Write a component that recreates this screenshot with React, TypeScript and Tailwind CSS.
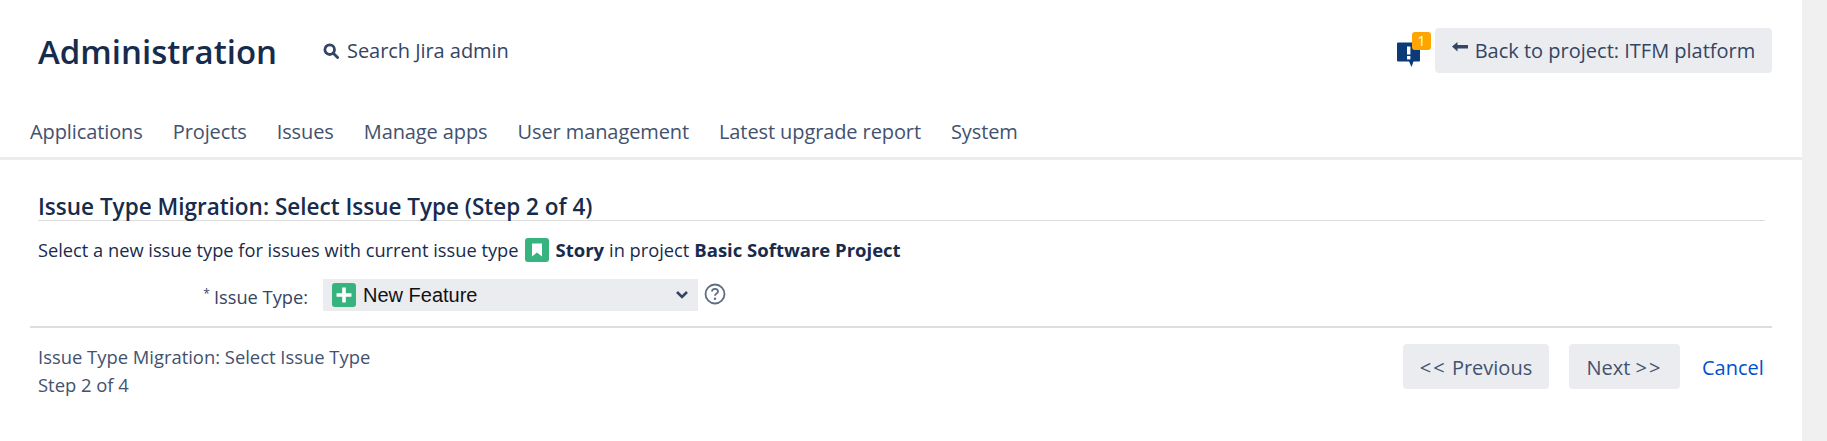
const font = { fontFamily: '"Open Sans", sans-serif' };

function SearchIcon() {
  return (
    <svg width="16" height="16" viewBox="0 0 16 16" fill="none" stroke="#344563" strokeWidth="2.8">
      <circle cx="6.7" cy="6.7" r="4.8" />
      <path d="M10 10l4.6 4.6" strokeLinecap="round" />
    </svg>
  );
}

function FeedbackIcon() {
  return (
    <div className="relative w-[35px] h-[36px] -mt-[2px]">
      <svg className="absolute left-0 top-[9px]" width="26" height="27" viewBox="0 0 26 27">
        <path d="M2 1.5h21a1 1 0 0 1 1 1v17a1 1 0 0 1-1 1h-5.5L15.5 26l-2.5-5.5H2a1 1 0 0 1-1-1v-17a1 1 0 0 1 1-1z" fill="#0b3a78" />
        <rect x="11" y="5.5" width="3.4" height="8" fill="#fff" />
        <rect x="11" y="15" width="3.4" height="3.4" fill="#fff" />
      </svg>
      <div className="absolute left-[16px] top-0 w-[19px] h-[18px] rounded-[3px] bg-[#ffa500] text-white text-[14px] leading-[17px] text-center">1</div>
    </div>
  );
}

function IssueIcon({ kind }: { kind: "story" | "feature" }) {
  return (
    <svg width="24" height="24" viewBox="0 0 24 24" className="shrink-0">
      <rect width="24" height="24" rx="3" fill="#36b37e" />
      {kind === "story" ? (
        <path d="M7 5.5h10v13l-5-4-5 4z" fill="#fff" />
      ) : (
        <path d="M10.2 4.5h3.6v5.7h5.7v3.6h-5.7v5.7h-3.6v-5.7H4.5v-3.6h5.7z" fill="#fff" />
      )}
    </svg>
  );
}

const navItems = ["Applications", "Projects", "Issues", "Manage apps", "User management", "Latest upgrade report", "System"];

export default function App() {
  return (
    <div style={font} className="flex w-[1827px] h-[441px] overflow-hidden bg-white text-[#172b4d]">
      <div className="w-[1802px] shrink-0">
        <header className="h-[101px] flex items-center pl-[38px] pr-[30px]">
          <h1 className="w-[285px] pt-[2px] text-[33px] leading-[40px] font-semibold text-[#172b4d] whitespace-nowrap">Administration</h1>
          <div className="flex items-center gap-[8px] text-[#344563] text-[20px] tracking-[-0.05px] whitespace-nowrap">
            <SearchIcon />
            <span>Search Jira admin</span>
          </div>
          <div className="ml-auto flex items-center gap-[4px]">
            <FeedbackIcon />
            <div className="h-[45px] w-[337px] rounded-[4px] bg-[#ebecf0] flex items-center justify-center gap-[7px] text-[#344563] text-[20px] whitespace-nowrap">
              <svg width="16" height="12" viewBox="0 0 16 12" className="-mt-[6px]" fill="#344563">
                <path d="M0 4.5L5.5 0v3H16v3.5H5.5v3z" />
              </svg>
              <span>Back to project: ITFM platform</span>
            </div>
          </div>
        </header>

        <nav className="h-[59px] border-b-[3px] border-[#ebecf0] flex items-center gap-[30px] pl-[30px] pt-[6px] text-[#42526e] text-[20px] tracking-[-0.1px] whitespace-nowrap">
          {navItems.map((n) => (
            <span key={n}>{n}</span>
          ))}
        </nav>

        <main className="pt-[34px]">
          <div className="ml-[38px] mr-[37px] border-b border-[#dddddd] h-[27px]">
            <h2 className="text-[22.5px] leading-[26px] font-semibold whitespace-nowrap">Issue Type Migration: Select Issue Type (Step 2 of 4)</h2>
          </div>
          <div className="ml-[38px] mt-[17px] h-[24px] flex items-center text-[18.25px] whitespace-nowrap">
            <span>Select a new issue type for issues with current issue type</span>
            <span className="ml-[7px] mr-[6px]"><IssueIcon kind="story" /></span>
            <span className="font-bold text-[18.5px]">Story</span>
            <span className="mx-[5px]">in project</span>
            <span className="font-bold text-[18.5px]">Basic Software Project</span>
          </div>
          <div className="mt-[17px] h-[32px] flex items-center">
            <div className="w-[308px] text-right text-[18.25px] text-[#344563] pt-[4px] whitespace-nowrap">
              <sup className="text-[12px] mr-[4px]">*</sup>Issue Type:
            </div>
            <div className="ml-[15px] w-[375px] h-[32px] bg-[#ebecf0] flex items-center pl-[9px] pr-[9px]">
              <IssueIcon kind="feature" />
              <span className="ml-[7px] text-[20px] text-[#111111]" style={{ fontFamily: '"Liberation Sans", sans-serif' }}>New Feature</span>
              <svg className="ml-auto" width="14" height="10" viewBox="0 0 14 10" fill="none" stroke="#344563" strokeWidth="2.6">
                <path d="M2 2l5 5 5-5" />
              </svg>
            </div>
            <svg className="ml-[6px] -mt-[3px]" width="22" height="22" viewBox="0 0 22 22" fill="none">
              <circle cx="11" cy="11" r="9.5" stroke="#5e6c84" strokeWidth="1.8" />
              <path d="M8 8.6c0-1.8 1.4-2.8 3-2.8s3 1 3 2.6c0 2.2-3 2.2-3 4.4" stroke="#5e6c84" strokeWidth="1.8" />
              <circle cx="11" cy="15.8" r="1.2" fill="#5e6c84" />
            </svg>
          </div>
          <div className="ml-[30px] mr-[30px] mt-[15px] border-t-2 border-[#dddddd] pt-[15px] flex">
            <div className="pl-[8px] text-[#42526e] text-[18.4px] leading-[28px] whitespace-nowrap">
              <div>Issue Type Migration: Select Issue Type</div>
              <div>Step 2 of 4</div>
            </div>
            <div className="ml-auto flex items-start text-[#42526e] text-[20px] whitespace-nowrap mt-[1px]">
              <div className="w-[146px] h-[45px] pt-[2px] rounded-[4px] bg-[#ebecf0] flex items-center justify-center">
                <span className="tracking-[2px]">&lt;&lt;</span>&nbsp;Previous
              </div>
              <div className="ml-[20px] w-[111px] h-[45px] pt-[2px] rounded-[4px] bg-[#ebecf0] flex items-center justify-center">
                Next&nbsp;<span className="tracking-[2px]">&gt;&gt;</span>
              </div>
              <a className="ml-[22px] mr-[9px] w-[61px] h-[45px] pt-[2px] flex items-center text-[#0052cc]">Cancel</a>
            </div>
          </div>
        </main>
      </div>
      <div className="w-[25px] bg-[#f0f0f0]" />
    </div>
  );
}
